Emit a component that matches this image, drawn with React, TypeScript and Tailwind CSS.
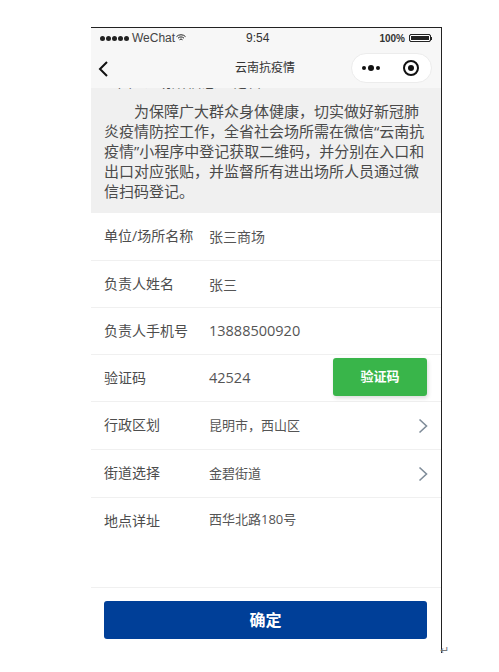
import React from "react";

const font = { fontFamily: '"Open Sans", "Noto Sans CJK SC", sans-serif' };

function Chevron() {
  return (
    <svg width="10" height="16" viewBox="0 0 10 16" fill="none" stroke="#7f8c99" strokeWidth="1.6" className="ml-auto mr-[13px]">
      <path d="M1.5 1.5 8.5 8 1.5 14.5" />
    </svg>
  );
}

function Row({ label, value, h, right, size }: { label: string; value: string; h: string; right?: React.ReactNode; size: string }) {
  return (
    <div className={`flex items-center border-b border-[#f0f0f0] pl-[13px] ${h}`}>
      <div className="w-[105px] shrink-0 pb-[2px] text-[14px] text-[#4d4d4d]">{label}</div>
      <div className={`${size} text-[#555]`}>{value}</div>
      {right}
    </div>
  );
}

export default function App() {
  return (
    <div className="h-[672px] w-[499px] bg-white pl-[91px] pt-[27px]" style={font}>
      <div className="relative flex h-[626px] w-[351px] flex-col border-r border-t border-[#222] bg-white">
        <div className="flex h-[20px] shrink-0 items-center bg-[#f7f7f7] px-[9px] text-[11px] text-[#333]" style={{ fontFamily: '"Liberation Sans", sans-serif' }}>
          <div className="flex w-[100px] items-center gap-[1px]">
            <span className="flex gap-[1px]">
              {[0, 1, 2, 3, 4].map((i) => (
                <span key={i} className="h-[5px] w-[5px] rounded-full bg-[#222]" />
              ))}
            </span>
            <span className="ml-[2px] text-[12px] text-[#444]">WeChat</span>
            <svg width="10" height="8" viewBox="0 0 10 8" fill="none" stroke="#222" strokeWidth="1">
              <path d="M.5 2.6a6.4 6.4 0 0 1 9 0M2 4.2a4.2 4.2 0 0 1 6 0M3.5 5.8a2 2 0 0 1 3 0" />
            </svg>
          </div>
          <div className="ml-[46px] text-[12px]">9:54</div>
          <div className="ml-auto flex items-center gap-[4px] text-[10px] font-bold">
            <span>100%</span>
            <span className="flex items-center">
              <span className="block h-[8px] w-[22px] rounded-[2px] border border-[#222] bg-[#222] outline-1 outline-white -outline-offset-2" />
              <span className="h-[3px] w-[1px] bg-[#222]" />
            </span>
          </div>
        </div>
        <div className="relative flex h-[40px] shrink-0 items-center justify-center bg-[#f7f7f7] text-[12px] text-[#333]">
          <svg width="12" height="18" viewBox="0 0 12 18" fill="none" stroke="#111" strokeWidth="2" className="absolute left-[6px] top-[12px]">
            <path d="M10 2 3 9l7 7" />
          </svg>
          <span className="-ml-[2px]">云南抗疫情</span>
          <div className="absolute left-[260px] top-[5px] flex h-[30px] w-[81px] items-center rounded-full border border-[#ececec] bg-white">
            <span className="ml-[10px] flex items-center gap-[2px]">
              <span className="h-[4px] w-[4px] rounded-full bg-[#111]" />
              <span className="h-[6px] w-[6px] rounded-full bg-[#111]" />
              <span className="h-[4px] w-[4px] rounded-full bg-[#111]" />
            </span>
            <span className="ml-auto mr-[12px] flex h-[16px] w-[16px] items-center justify-center rounded-full border-2 border-[#111]">
              <span className="h-[6px] w-[6px] rounded-full bg-[#111]" />
            </span>
          </div>
        </div>
        <div className="h-[125px] shrink-0 overflow-hidden bg-[#f0f0f0] px-[13px] text-[15px] leading-[20px] text-[#4a4a4a]">
          <div className="-mt-[17px] h-[20px] whitespace-nowrap pl-[8px]">单位、场所信息登记管理</div>
          <p className="mt-[10px] w-[325px] indent-[30px]">
            为保障广大群众身体健康，切实做好新冠肺炎疫情防控工作，全省社会场所需在微信“云南抗疫情”小程序中登记获取二维码，并分别在入口和出口对应张贴，并监督所有进出场所人员通过微信扫码登记。
          </p>
        </div>
        <Row label="单位/场所名称" value="张三商场" size="text-[14px]" h="h-[48px]" />
        <Row label="负责人姓名" value="张三" size="text-[14px]" h="h-[47px]" />
        <Row label="负责人手机号" value="13888500920" size="text-[14.5px]" h="h-[47px]" />
        <Row
          label="验证码"
          value="42524"
          size="text-[14.5px]"
          h="h-[47px]"
          right={
            <div className="mb-[3px] ml-auto mr-[14px] flex h-[38px] w-[94px] items-center justify-center rounded-[3px] bg-[#39b54a] text-[13px] font-bold text-white shadow-[1px_2px_4px_rgba(0,0,0,0.15)]">
              验证码
            </div>
          }
        />
        <Row label="行政区划" value="昆明市，西山区" size="text-[13px]" h="h-[48px]" right={<Chevron />} />
        <Row label="街道选择" value="金碧街道" size="text-[13px]" h="h-[48px]" right={<Chevron />} />
        <Row label="地点详址" value="西华北路180号" size="text-[13px]" h="h-[90px] !items-start pt-[12px]" />
        <div className="px-[13px] pt-[13px]">
          <div className="flex h-[38px] w-[323px] items-center justify-center rounded-[3px] bg-[#003f98] text-[16px] font-bold text-white">
            确定
          </div>
        </div>
        <span className="absolute -right-[8px] bottom-[-2px] text-[11px] leading-none text-[#777]">↵</span>
      </div>
    </div>
  );
}
